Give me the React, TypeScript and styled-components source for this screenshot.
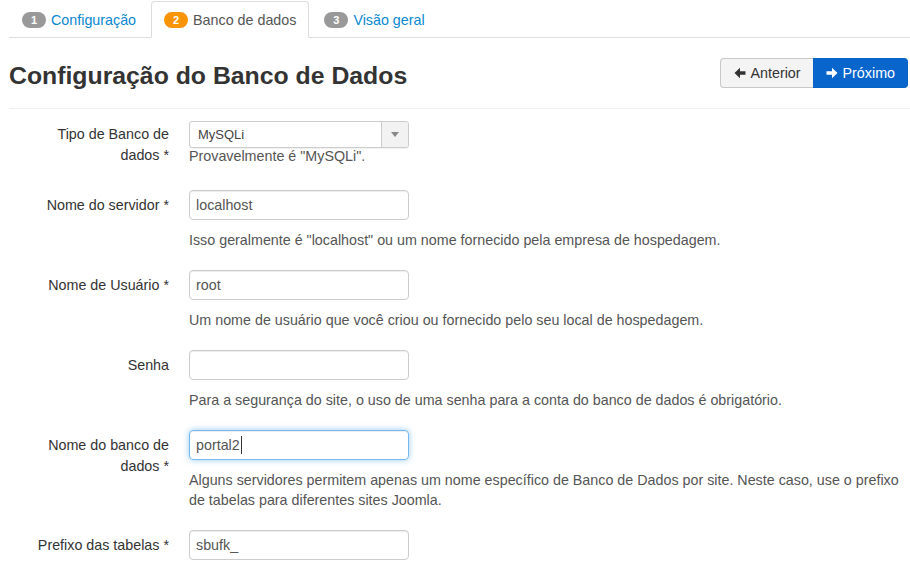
import React from "react";
import styled, { createGlobalStyle } from "styled-components";

const Global = createGlobalStyle`
  html, body { margin: 0; padding: 0; background: #fff; }
  body { font-family: "Liberation Sans", Arial, sans-serif; font-size: 14.3px; color: #333; }
  * { box-sizing: border-box; }
`;

const Page = styled.div`
  padding: 0 0 0 9px;
  width: 910px;
`;

const Tabs = styled.ul`
  list-style: none;
  margin: 0;
  padding: 1px 0 0 0;
  display: flex;
  border-bottom: 1px solid #ddd;
  height: 38px;
`;

const Tab = styled.li<{ $active?: boolean }>`
  margin: 0 2px -1px 0;
  height: 37px;
  padding: 0 12px;
  display: flex;
  align-items: center;
  gap: 5px;
  border: 1px solid ${(p) => (p.$active ? "#ddd" : "transparent")};
  border-bottom-color: ${(p) => (p.$active ? "#fff" : "transparent")};
  border-radius: 4px 4px 0 0;
  background: ${(p) => (p.$active ? "#fff" : "transparent")};
  color: ${(p) => (p.$active ? "#555" : "#0a88d0")};
  font-size: 14.3px;
`;

const Badge = styled.span<{ $color: string }>`
  display: inline-flex;
  align-items: center;
  justify-content: center;
  height: 16px;
  min-width: 24px;
  padding: 0 7px;
  border-radius: 9px;
  background: ${(p) => p.$color};
  color: #fff;
  font-size: 11px;
  font-weight: bold;
`;

const Header = styled.div`
  display: flex;
  align-items: center;
  justify-content: space-between;
  padding: 21px 2px 19px 0;
  border-bottom: 1px solid #eee;
  height: 71px;
`;

const Title = styled.h3`
  margin: 0;
  font-size: 24.8px;
  font-weight: bold;
  color: #333;
  line-height: 30px;
  padding-top: 3px;
`;

const BtnGroup = styled.div`
  display: flex;
  margin-top: -3px;
`;

const Btn = styled.button<{ $primary?: boolean }>`
  font-family: inherit;
  font-size: 14.3px;
  height: 30px;
  display: flex;
  align-items: center;
  gap: 5px;
  padding: ${(p) => (p.$primary ? "0 12px 0 13px" : "0 12px 0 13px")};
  cursor: pointer;
  border: 1px solid ${(p) => (p.$primary ? "#0762c4" : "#c8c8c8")};
  background: ${(p) => (p.$primary ? "#0865cc" : "#f4f4f4")};
  color: ${(p) => (p.$primary ? "#fff" : "#333")};
  border-radius: ${(p) => (p.$primary ? "0 4px 4px 0" : "4px 0 0 4px")};
  ${(p) => (p.$primary ? "border-left: none;" : "border-right: none;")}
`;

const Form = styled.div`
  display: flex;
  flex-direction: column;
  padding-top: 12px;
`;

const Row = styled.div<{ $gap?: number }>`
  display: grid;
  grid-template-columns: 160px 1fr;
  column-gap: 20px;
  margin-bottom: ${(p) => p.$gap ?? 20}px;
`;

const Label = styled.label<{ $top?: number }>`
  text-align: right;
  line-height: 21px;
  padding-left: 10px;
  padding-top: ${(p) => p.$top ?? 5}px;
  color: #333;
`;

const Control = styled.div`
  display: flex;
  flex-direction: column;
  align-items: flex-start;
`;

const Input = styled.div<{ $focus?: boolean }>`
  width: 220px;
  height: 30px;
  border: 1px solid ${(p) => (p.$focus ? "rgba(82,168,236,0.8)" : "#ccc")};
  border-radius: 4px;
  padding: 0 6px;
  display: flex;
  align-items: center;
  font-size: 14.3px;
  color: #555;
  box-shadow: ${(p) =>
    p.$focus
      ? "inset 0 1px 1px rgba(0,0,0,.075), 0 0 6px rgba(82,168,236,.6)"
      : "inset 0 1px 1px rgba(0,0,0,.075)"};
`;

const Caret = styled.span`
  display: inline-block;
  width: 1px;
  height: 18px;
  background: #333;
  margin-left: 1px;
`;

const Select = styled.div`
  width: 220px;
  height: 27px;
  border: 1px solid #ccc;
  border-radius: 3px;
  display: flex;
  background: #fff;
  box-shadow: 0 1px 1px rgba(0,0,0,.06);
`;

const SelectText = styled.span`
  flex: 1;
  padding-left: 8px;
  font-size: 13px;
  color: #444;
  display: flex;
  align-items: center;
`;

const SelectArrow = styled.span`
  width: 27px;
  border-left: 1px solid #ccc;
  background: #f2f2f2;
  border-radius: 0 3px 3px 0;
  display: flex;
  align-items: center;
  justify-content: center;
  &::after {
    content: "";
    border-left: 4px solid transparent;
    border-right: 4px solid transparent;
    border-top: 5px solid #888;
  }
`;

const Help = styled.p<{ $top?: number }>`
  margin: ${(p) => p.$top ?? 10}px 0 0 0;
  line-height: 20px;
  color: #555;
  font-size: 14.3px;
  max-width: 720px;
`;

const ArrowIcon = ({ dir }: { dir: "left" | "right" }) => (
  <svg width="12" height="12" viewBox="0 0 12 12" aria-hidden="true">
    {dir === "left" ? (
      <path d="M0.5 6 L6 0.8 V4.3 H11.5 V7.7 H6 V11.2 Z" fill="currentColor" />
    ) : (
      <path d="M11.5 6 L6 0.8 V4.3 H0.5 V7.7 H6 V11.2 Z" fill="currentColor" />
    )}
  </svg>
);

export default function App() {
  return (
    <Page>
      <Global />
      <Tabs>
        <Tab>
          <Badge $color="#999">1</Badge>
          Configuração
        </Tab>
        <Tab $active>
          <Badge $color="#f89406">2</Badge>
          Banco de dados
        </Tab>
        <Tab>
          <Badge $color="#999">3</Badge>
          Visão geral
        </Tab>
      </Tabs>
      <Header>
        <Title>Configuração do Banco de Dados</Title>
        <BtnGroup>
          <Btn>
            <ArrowIcon dir="left" />
            Anterior
          </Btn>
          <Btn $primary>
            <ArrowIcon dir="right" />
            Próximo
          </Btn>
        </BtnGroup>
      </Header>
      <Form>
        <Row $gap={24}>
          <Label $top={3}>Tipo de Banco de dados *</Label>
          <Control>
            <Select>
              <SelectText>MySQLi</SelectText>
              <SelectArrow />
            </Select>
            <Help $top={-2}>Provavelmente é "MySQLi".</Help>
          </Control>
        </Row>
        <Row>
          <Label>Nome do servidor *</Label>
          <Control>
            <Input>localhost</Input>
            <Help>Isso geralmente é "localhost" ou um nome fornecido pela empresa de hospedagem.</Help>
          </Control>
        </Row>
        <Row>
          <Label>Nome de Usuário *</Label>
          <Control>
            <Input>root</Input>
            <Help>Um nome de usuário que você criou ou fornecido pelo seu local de hospedagem.</Help>
          </Control>
        </Row>
        <Row>
          <Label>Senha</Label>
          <Control>
            <Input />
            <Help>Para a segurança do site, o uso de uma senha para a conta do banco de dados é obrigatório.</Help>
          </Control>
        </Row>
        <Row>
          <Label>Nome do banco de dados *</Label>
          <Control>
            <Input $focus>
              portal2
              <Caret />
            </Input>
            <Help>
              Alguns servidores permitem apenas um nome específico de Banco de Dados por site. Neste caso, use o prefixo de tabelas para diferentes sites Joomla.
            </Help>
          </Control>
        </Row>
        <Row>
          <Label>Prefixo das tabelas *</Label>
          <Control>
            <Input>sbufk_</Input>
          </Control>
        </Row>
      </Form>
    </Page>
  );
}
